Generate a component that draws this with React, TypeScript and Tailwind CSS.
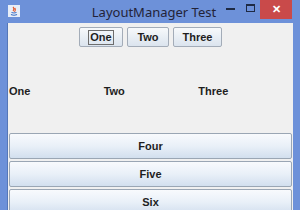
const Btn = ({ label, focus }: { label: string; focus?: boolean }) => (
  <button className="w-full h-[20px] px-[4px] border border-[#a3acb8] rounded-[2px] bg-gradient-to-b from-[#f7f9fb] to-[#dbe4ee] text-[11px] font-bold text-[#1e1e1e] flex items-center justify-center">
    <span className={focus ? "border border-[#6d6d6d] px-[1px] leading-[13px]" : "px-[2px] leading-[13px]"}>{label}</span>
  </button>
);

const WideBtn = ({ label }: { label: string }) => (
  <button className="h-[26px] w-full border border-[#9aa6b4] rounded-[2px] bg-gradient-to-b from-[#f8fafd] via-[#e9f0f8] to-[#d2dfee] text-[11px] font-bold text-[#1e1e1e] flex items-center justify-center">
    {label}
  </button>
);

export default function App() {
  return (
    <div className="w-[300px] h-[210px] overflow-hidden bg-[#6d91d9] flex flex-col" style={{ fontFamily: '"Liberation Sans", Arial, sans-serif' }}>
      <div className="h-[23px] flex items-start relative shrink-0">
        <svg className="absolute left-[8px] top-[5px]" width="12" height="12" viewBox="0 0 12 12">
          <rect x="0" y="0" width="12" height="12" fill="#e8eef8" />
          <path d="M3 9.5 Q6 11 9 9.5" stroke="#3c6fc4" strokeWidth="1.2" fill="none" />
          <path d="M5 2 Q7 4 5 6 M7 3 Q8 5 6.5 7" stroke="#e2572b" strokeWidth="1.1" fill="none" />
          <path d="M3.5 7.5 Q6 8.5 8.5 7.5" stroke="#3c6fc4" strokeWidth="1" fill="none" />
        </svg>
        <div className="flex-1 text-center text-[13px] text-[#232338] pt-[3px] pl-[8px]" style={{ fontFamily: '"Noto Sans", "Open Sans", sans-serif' }}>
          LayoutManager Test
        </div>
        <div className="absolute left-[226px] top-[8px] w-[9px] h-[2px] bg-[#1e2a44]" />
        <div className="absolute left-[246px] top-[4px] w-[9px] h-[8px] border border-[#1e2a44] border-t-2" />
        <div className="absolute left-[260px] top-0 w-[32px] h-[19px] bg-[#c94a4a] flex items-center justify-center text-white text-[11px] font-bold">
          ✕
        </div>
      </div>
      <div className="flex-1 flex px-[7px]">
        <div className="flex-1 bg-[#f0f0f0] flex flex-col border-l border-[#5577b8]">
          <div className="flex justify-center gap-[4px] pt-[4px] h-[27px]">
            <div className="w-[44px] flex"><Btn label="One" focus /></div>
            <div className="w-[42px] flex"><Btn label="Two" /></div>
            <div className="w-[49px] flex"><Btn label="Three" /></div>
          </div>
          <div className="h-[83px] grid grid-cols-3 items-center text-[11px] font-bold text-[#1e1e1e] pl-[1px]">
            <span>One</span>
            <span>Two</span>
            <span>Three</span>
          </div>
          <div className="flex flex-col gap-[2px] px-[1px]">
            <WideBtn label="Four" />
            <WideBtn label="Five" />
            <WideBtn label="Six" />
          </div>
        </div>
      </div>
    </div>
  );
}
